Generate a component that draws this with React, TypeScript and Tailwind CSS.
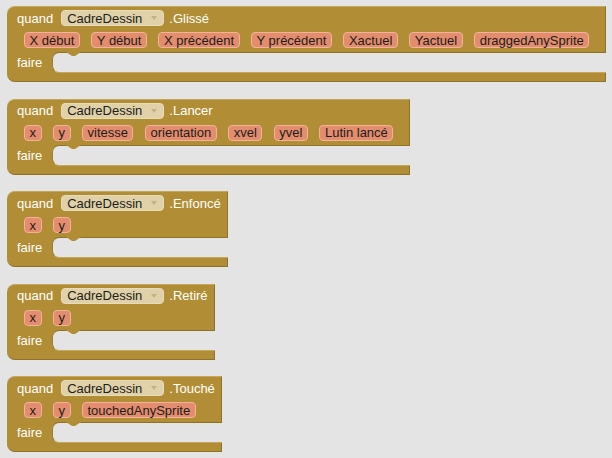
import React from "react";

type BlockProps = { event: string; params: string[] };

function Pill({ label }: { label: string }) {
  return (
    <div className="h-[16px] flex items-center rounded-[4px] border border-[#f1b499] bg-[#e38d6e] px-[4.5px] text-[13px] leading-none text-[#1c1c1c]">
      {label}
    </div>
  );
}

function Block({ event, params }: BlockProps) {
  return (
    <div className="flex w-fit flex-col">
      <div className="flex flex-col items-start rounded-tl-[8px] border-t border-r border-t-[#c4a65c] border-r-[#8f722a] bg-[#b18e35] pt-[3px] pb-[4px] pl-[10px]">
        <div className="flex h-[16px] items-center pr-[6px] text-[13px] leading-none text-white">
          <span>quand</span>
          <div className="ml-[8px] flex h-[16px] items-center rounded-[4px] border border-[#e8dbb8] bg-[#e0d1a8] pl-[5px] pr-[5px] text-[#1c1c1c]">
            <span>CadreDessin</span>
            <svg width="8" height="6" viewBox="0 0 8 6" className="ml-[8px]">
              <path d="M1 1 L7 1 L4 5 Z" fill="#c2b189" />
            </svg>
          </div>
          <span className="ml-[5px]">{event}</span>
        </div>
        <div className="mt-[6px] flex h-[16px] items-center gap-[11.5px] pl-[7px] pr-[16px]">
          {params.map((p) => (
            <Pill key={p} label={p} />
          ))}
        </div>
      </div>
      <div className="flex h-[21px] bg-[#b18e35]">
        <div className="flex w-[45px] items-center pl-[10px] text-[13px] leading-none text-white">
          faire
        </div>
        <div className="relative flex-1 rounded-l-[7px] border-t border-b border-l border-t-[#8f722a] border-l-[#9c7e2f] border-b-[#c4a65c] bg-[#e4e4e4]">
          <svg width="16" height="5" viewBox="0 0 16 5" className="absolute left-[13px] top-[-1px]">
            <path d="M0 0 L6 4 L9 4 L15 0 Z" fill="#b18e35" />
          </svg>
        </div>
      </div>
      <div className="h-[9px] rounded-bl-[8px] border-r border-b border-r-[#8f722a] border-b-[#8f722a] bg-[#b18e35]" />
    </div>
  );
}

export default function App() {
  const blocks: BlockProps[] = [
    {
      event: ".Glissé",
      params: ["X début", "Y début", "X précédent", "Y précédent", "Xactuel", "Yactuel", "draggedAnySprite"],
    },
    {
      event: ".Lancer",
      params: ["x", "y", "vitesse", "orientation", "xvel", "yvel", "Lutin lancé"],
    },
    { event: ".Enfoncé", params: ["x", "y"] },
    { event: ".Retiré", params: ["x", "y"] },
    { event: ".Touché", params: ["x", "y", "touchedAnySprite"] },
  ];
  return (
    <div
      className="flex h-[458px] w-[612px] flex-col gap-[16.5px] overflow-hidden bg-[#e4e4e4] pt-[6px] pl-[7px]"
      style={{ fontFamily: '"Liberation Sans", Arial, sans-serif' }}
    >
      {blocks.map((b) => (
        <Block key={b.event} {...b} />
      ))}
    </div>
  );
}
